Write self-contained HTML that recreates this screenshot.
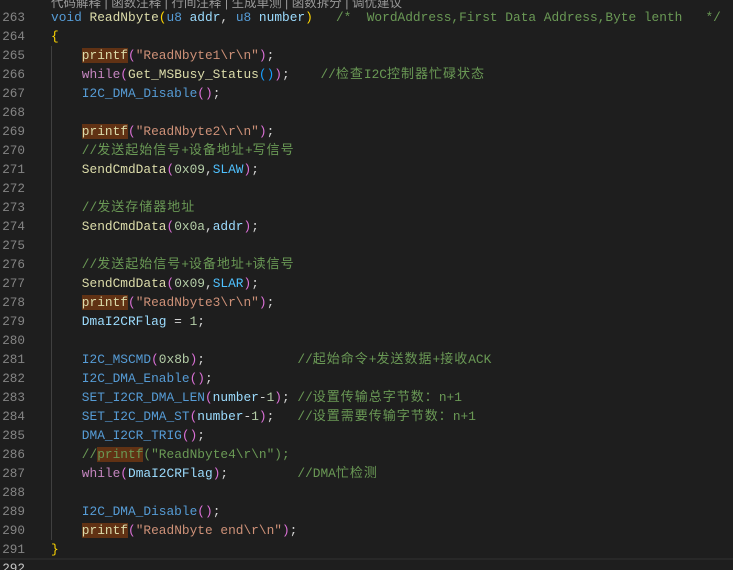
<!DOCTYPE html>
<html><head><meta charset="utf-8"><style>
html,body{margin:0;padding:0;background:#1e1e1e;width:733px;height:570px;overflow:hidden;position:relative}
.l{position:absolute;left:0;height:19px;line-height:19px;white-space:pre;font-family:"Liberation Mono","Noto Sans CJK SC",monospace;font-size:12.83px;color:#d4d4d4}
.n{position:absolute;left:0;top:0;width:25px;text-align:right;color:#858585;font-size:12.66px}
.c{position:absolute;left:51px;top:0}
.z{font-family:"Noto Sans CJK SC",sans-serif;font-size:13px;letter-spacing:1px;line-height:0}
.f{color:#dcdcaa}.k{color:#569cd6}.w{color:#c586c0}.s{color:#ce9178}.m{color:#6a9955}.v{color:#9cdcfe}.num{color:#b5cea8}.mac{color:#569cd6}.cst{color:#4fc1ff}
.p1{color:#ffd700}.p2{color:#da70d6}.p3{color:#179fff}
.h{background:#613214}
.hdr{position:absolute;left:51px;top:-8px;font-family:"Liberation Sans","Noto Sans CJK SC",sans-serif;font-size:12.5px;color:#999;white-space:pre}
.guide{position:absolute;left:51px;top:46px;width:1px;height:494px;background:#404040}
.cur{position:absolute;left:0;top:558px;width:733px;height:17px;border-top:2px solid #282828;border-bottom:2px solid #282828}
</style></head><body>
<div class="hdr">代码解释 | 函数注释 | 行间注释 | 生成单测 | 函数拆分 | 调优建议</div>
<div class="guide"></div>
<div class="cur"></div>
<div class="l" style="top:8px"><span class="n">263</span><span class="c"><span class="k">void</span> <span class="f">ReadNbyte</span><span class="p1">(</span><span class="k">u8</span> <span class="v">addr</span>, <span class="k">u8</span> <span class="v">number</span><span class="p1">)</span>   <span class="m">/*  WordAddress,First Data Address,Byte lenth   */</span></span></div>
<div class="l" style="top:27px"><span class="n">264</span><span class="c"><span class="p1">{</span></span></div>
<div class="l" style="top:46px"><span class="n">265</span><span class="c">    <span class="f h">printf</span><span class="p2">(</span><span class="s">"ReadNbyte1\r\n"</span><span class="p2">)</span>;</span></div>
<div class="l" style="top:65px"><span class="n">266</span><span class="c">    <span class="w">while</span><span class="p2">(</span><span class="f">Get_MSBusy_Status</span><span class="p3">()</span><span class="p2">)</span>;    <span class="m">//<span class="z">检查</span>I2C<span class="z">控制器忙碌状态</span></span></span></div>
<div class="l" style="top:84px"><span class="n">267</span><span class="c">    <span class="mac">I2C_DMA_Disable</span><span class="p2">()</span>;</span></div>
<div class="l" style="top:103px"><span class="n">268</span></div>
<div class="l" style="top:122px"><span class="n">269</span><span class="c">    <span class="f h">printf</span><span class="p2">(</span><span class="s">"ReadNbyte2\r\n"</span><span class="p2">)</span>;</span></div>
<div class="l" style="top:141px"><span class="n">270</span><span class="c">    <span class="m">//<span class="z">发送起始信号</span>+<span class="z">设备地址</span>+<span class="z">写信号</span></span></span></div>
<div class="l" style="top:160px"><span class="n">271</span><span class="c">    <span class="f">SendCmdData</span><span class="p2">(</span><span class="num">0x09</span>,<span class="cst">SLAW</span><span class="p2">)</span>;</span></div>
<div class="l" style="top:179px"><span class="n">272</span></div>
<div class="l" style="top:198px"><span class="n">273</span><span class="c">    <span class="m">//<span class="z">发送存储器地址</span></span></span></div>
<div class="l" style="top:217px"><span class="n">274</span><span class="c">    <span class="f">SendCmdData</span><span class="p2">(</span><span class="num">0x0a</span>,<span class="v">addr</span><span class="p2">)</span>;</span></div>
<div class="l" style="top:236px"><span class="n">275</span></div>
<div class="l" style="top:255px"><span class="n">276</span><span class="c">    <span class="m">//<span class="z">发送起始信号</span>+<span class="z">设备地址</span>+<span class="z">读信号</span></span></span></div>
<div class="l" style="top:274px"><span class="n">277</span><span class="c">    <span class="f">SendCmdData</span><span class="p2">(</span><span class="num">0x09</span>,<span class="cst">SLAR</span><span class="p2">)</span>;</span></div>
<div class="l" style="top:293px"><span class="n">278</span><span class="c">    <span class="f h">printf</span><span class="p2">(</span><span class="s">"ReadNbyte3\r\n"</span><span class="p2">)</span>;</span></div>
<div class="l" style="top:312px"><span class="n">279</span><span class="c">    <span class="v">DmaI2CRFlag</span> = <span class="num">1</span>;</span></div>
<div class="l" style="top:331px"><span class="n">280</span></div>
<div class="l" style="top:350px"><span class="n">281</span><span class="c">    <span class="mac">I2C_MSCMD</span><span class="p2">(</span><span class="num">0x8b</span><span class="p2">)</span>;            <span class="m">//<span class="z">起始命令</span>+<span class="z">发送数据</span>+<span class="z">接收</span>ACK</span></span></div>
<div class="l" style="top:369px"><span class="n">282</span><span class="c">    <span class="mac">I2C_DMA_Enable</span><span class="p2">()</span>;</span></div>
<div class="l" style="top:388px"><span class="n">283</span><span class="c">    <span class="mac">SET_I2CR_DMA_LEN</span><span class="p2">(</span><span class="v">number</span>-<span class="num">1</span><span class="p2">)</span>; <span class="m">//<span class="z">设置传输总字节数：</span>n+1</span></span></div>
<div class="l" style="top:407px"><span class="n">284</span><span class="c">    <span class="mac">SET_I2C_DMA_ST</span><span class="p2">(</span><span class="v">number</span>-<span class="num">1</span><span class="p2">)</span>;   <span class="m">//<span class="z">设置需要传输字节数：</span>n+1</span></span></div>
<div class="l" style="top:426px"><span class="n">285</span><span class="c">    <span class="mac">DMA_I2CR_TRIG</span><span class="p2">()</span>;</span></div>
<div class="l" style="top:445px"><span class="n">286</span><span class="c">    <span class="m">//<span class="h">printf</span>("ReadNbyte4\r\n");</span></span></div>
<div class="l" style="top:464px"><span class="n">287</span><span class="c">    <span class="w">while</span><span class="p2">(</span><span class="v">DmaI2CRFlag</span><span class="p2">)</span>;         <span class="m">//DMA<span class="z">忙检测</span></span></span></div>
<div class="l" style="top:483px"><span class="n">288</span></div>
<div class="l" style="top:502px"><span class="n">289</span><span class="c">    <span class="mac">I2C_DMA_Disable</span><span class="p2">()</span>;</span></div>
<div class="l" style="top:521px"><span class="n">290</span><span class="c">    <span class="f h">printf</span><span class="p2">(</span><span class="s">"ReadNbyte end\r\n"</span><span class="p2">)</span>;</span></div>
<div class="l" style="top:540px"><span class="n">291</span><span class="c"><span class="p1">}</span></span></div>
<div class="l" style="top:559px"><span class="n" style="color:#c6c6c6">292</span></div>
</body></html>
